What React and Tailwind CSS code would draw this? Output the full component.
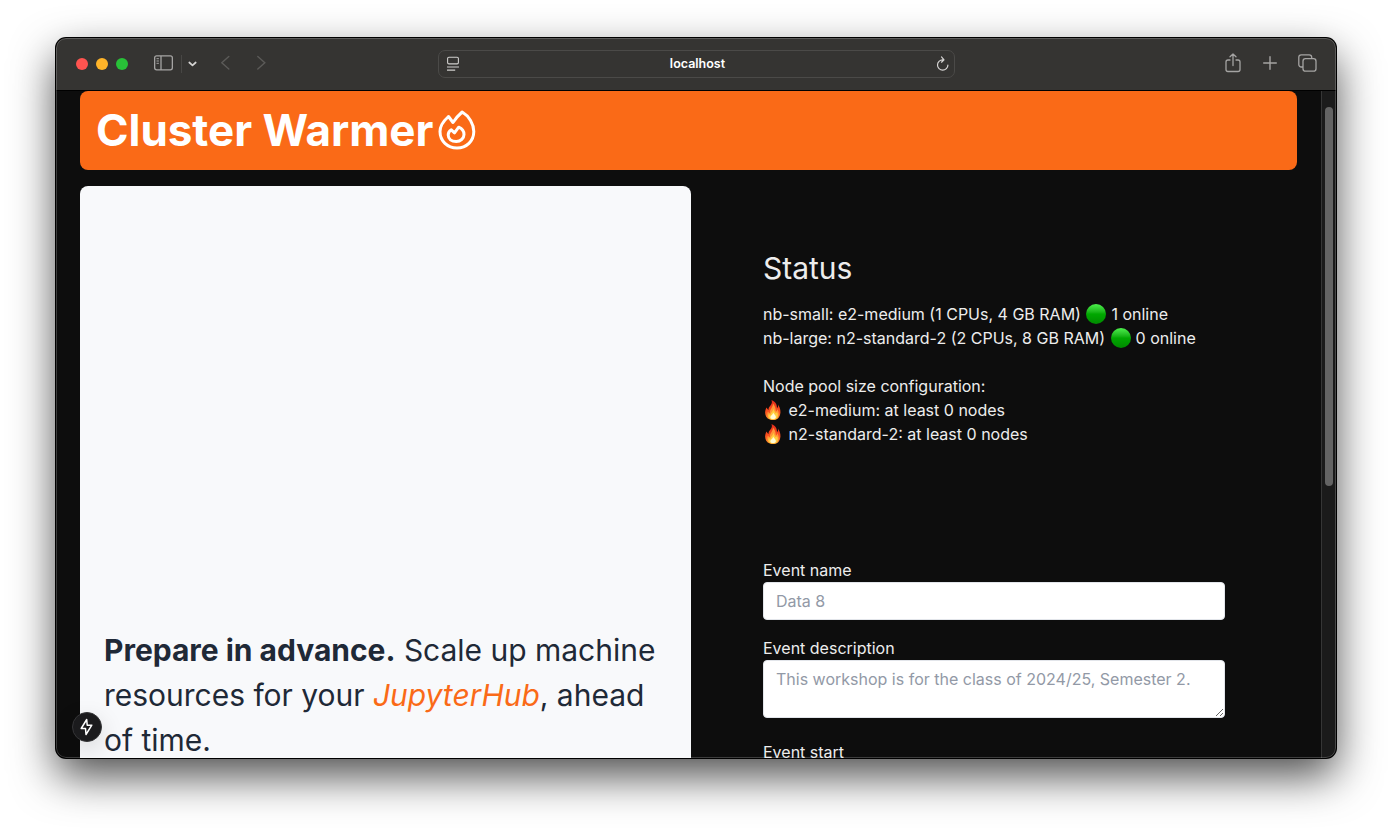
function HeaderFlame() {
  return (
    <svg width="38" height="40" viewBox="0 0 38 40" fill="none" stroke="#fff" strokeWidth="3" strokeLinejoin="round" strokeLinecap="round">
      <path d="M10.500 6.500C5.500 11 2 16.500 2 21.500C2 31 9.500 38 19 38S35.800 31 35.800 21.500C35.800 14 31 6 24.200 2C20.700 5 17.500 8.500 15 12.500C13.500 10.500 12 8.500 10.500 6.500Z" />
      <path d="M13.300 19.800C11.300 21 10.200 23 10.200 25C10.200 29 13.500 31.500 18.300 31.500C22.700 31.500 26 28 26 24.500C26 21 23.700 18.500 20.700 17.200L16.500 22.800Z" />
    </svg>
  );
}

function FireEmoji() {
  return (
    <svg className="mr-px inline-block align-[-4px]" width="20" height="20" viewBox="0 0 20 20">
      <defs>
        <linearGradient id="flame" x1="0" y1="0" x2="0" y2="1">
          <stop offset="0" stopColor="#e02a1b" />
          <stop offset=".6" stopColor="#fb531f" />
          <stop offset="1" stopColor="#ff9a2e" />
        </linearGradient>
      </defs>
      <path fill="url(#flame)" d="M8.500 0C12.500 1.500 14 4.500 14 8C15 7.500 15.300 6 15 4.500C17.500 8 18 12 17 15C16 18 14 20 10 20C5.500 20 3 17.500 2.400 14.500C1.700 11.500 2.500 9.500 3.500 7.500C4.200 8.500 4.800 9.500 5.500 10C5.300 8 6.500 6.500 7.800 5C9 3.500 9.200 2 8.500 0Z" />
      <path fill="#ff9838" d="M10 3.500C12.800 7 12.500 9.500 13 11.500C13.900 11 14.200 10 14.200 9C16.500 13 16 16 14.300 18C12.500 20 7.500 20 5.800 18C4 16 4 13.500 5 11.500C5.600 12.500 6.200 13 7 13C6.500 9.500 10 7.500 10 3.500Z" />
      <path fill="#ffcf3f" d="M10.300 8.500C11 11 12 12 12.700 13.300C13.400 13 13.700 12.500 13.800 12C15.300 14.500 15 17 13.700 18.500C12 20 8 20 6.400 18.500C5 17 5.200 15.500 5.800 14C6.400 14.600 7 14.800 7.600 14.700C7.500 12.500 10.300 11.500 10.300 8.500Z" />
      <path fill="#fffbd6" d="M10.200 12.500C10.800 14.500 13.300 15.200 12.800 17.700C12.400 19.500 7.700 19.600 7.400 17.700C7.100 15.700 10 14.800 10.200 12.500Z" />
    </svg>
  );
}

function GreenDot() {
  return <span className="ml-px mr-[0.5px] inline-block size-5 rounded-full align-[-4px] bg-linear-to-b from-[#4cf04c] via-[#00a800] via-50% to-[#008a00]" />;
}

function Toolbar() {
  return (
    <div className="flex h-[53px] shrink-0 items-center border-b border-black bg-[#353432] pb-px pl-5 pr-[19px] text-[#a5a4a3]">
      <div className="flex gap-2">
        <span className="size-3 rounded-full bg-[#ff5450]" />
        <span className="size-3 rounded-full bg-[#ffb429]" />
        <span className="size-3 rounded-full bg-[#28c138]" />
      </div>
      <svg className="-mt-px ml-[26px]" width="19" height="16" viewBox="0 0 19 16" fill="none" stroke="currentColor" strokeWidth="1.300">
        <rect x=".65" y=".85" width="17.700" height="14" rx="2" />
        <path d="M7 1v14" />
        <path d="M2.500 3.700h2.400M2.500 6h2.400M2.500 8.300h2.400" strokeWidth="1" />
      </svg>
      <span className="ml-2 h-[18px] w-px bg-[#484745]" />
      <svg className="ml-[6px]" width="9" height="6" viewBox="0 0 9 6" fill="none" stroke="#d5d4d3" strokeWidth="1.700" strokeLinecap="round" strokeLinejoin="round">
        <path d="M1.300 1.500 4.500 4.300 7.700 1.500" />
      </svg>
      <svg className="-mt-px ml-6" width="9" height="16" viewBox="0 0 9 16" fill="none" stroke="#5b5a58" strokeWidth="1.400" strokeLinecap="round">
        <path d="M7.800 1.400.8 7.700l7 6.300" />
      </svg>
      <svg className="-mt-px ml-[27px]" width="9" height="16" viewBox="0 0 9 16" fill="none" stroke="#5b5a58" strokeWidth="1.400" strokeLinecap="round">
        <path d="m.8 1.400 7 6.300-7 6.300" />
      </svg>
      <div className="ml-[172px] flex h-7 w-[517px] items-center rounded-[7px] border border-[#4b4a48] pl-2 pr-[5px]">
        <svg width="12" height="15" viewBox="0 0 12 15" fill="none" stroke="#cfcecd" strokeWidth="1.100">
          <rect x=".6" y="1.200" width="10.800" height="6.700" rx="1.300" />
          <path d="M0 11h12M0 14.100h8.200" />
        </svg>
        <span className="flex-1 pt-0.5 text-center text-[12.500px] font-semibold text-white">localhost</span>
        <svg width="13" height="15" viewBox="0 0 13 15" fill="none" stroke="#d5d4d3" strokeWidth="1.200" strokeLinecap="round" strokeLinejoin="round">
          <path d="M11.900 9A5.200 5.200 0 1 1 6.700 3.800M5.500.9l2.500 2.900-2.500 2.400" />
        </svg>
      </div>
      <svg className="-mt-[2px] ml-auto" width="16" height="20" viewBox="0 0 16 20" fill="none" stroke="currentColor" strokeWidth="1.300" strokeLinecap="round" strokeLinejoin="round">
        <path d="M5 7H3a2 2 0 0 0-2 2v7.500a2 2 0 0 0 2 2h10a2 2 0 0 0 2-2V9a2 2 0 0 0-2-2h-2M8 12.500V1M5 3.800 8 1l3 2.800" />
      </svg>
      <svg className="-mt-px ml-[22px]" width="14" height="14" viewBox="0 0 14 14" fill="none" stroke="currentColor" strokeWidth="1.400" strokeLinecap="round">
        <path d="M7 .7v12.600M.7 7h12.600" />
      </svg>
      <svg className="-mt-px ml-[21px]" width="19" height="18" viewBox="0 0 19 18" fill="none" stroke="currentColor" strokeWidth="1.300">
        <rect x="5" y="4.700" width="13" height="12.500" rx="2.500" />
        <path d="M5 13H3.300A2.500 2.500 0 0 1 .8 10.500V3.300A2.500 2.500 0 0 1 3.300.8h7.900a2.500 2.500 0 0 1 2.500 2.500v1.400" />
      </svg>
    </div>
  );
}

export default function App() {
  return (
    <div className="h-[832px] w-[1392px] overflow-hidden bg-white pl-14 pt-[38px] font-[Inter,sans-serif]">
      <div className="relative flex h-[720px] w-[1280px] flex-col overflow-hidden rounded-[10px] bg-[#0d0d0d] shadow-[0_0_0_1px_#000,0_18px_44px_rgba(0,0,0,0.7)]">
        <Toolbar />
        <div className="flex min-h-0 flex-1">
          <main className="w-[1265px] overflow-hidden px-6">
            <header className="flex h-[79px] items-center rounded-lg bg-[#fa6a17] pl-4 text-white">
              <h1 className="pb-0.5 text-[44px] font-bold leading-none tracking-[-0.04px]">Cluster Warmer</h1>
              <span className="-mt-px ml-[5px]"><HeaderFlame /></span>
            </header>
            <div className="mt-4 flex">
              <section className="h-[700px] w-[611px] rounded-lg bg-[#f8f9fb] px-6 pt-[442px]">
                <p className="whitespace-nowrap text-[30px] leading-[45px] tracking-[-0.015px] text-[#1f2937]">
                  <b>Prepare in advance.</b> Scale up machine<br />
                  resources for your <em className="text-[#fa6a17]">JupyterHub</em>, ahead<br />
                  of time.
                </p>
              </section>
              <section className="ml-[72px] w-[462px] whitespace-nowrap pt-16 text-base text-[#ededed]">
                <h2 className="text-[30px] leading-9">Status</h2>
                <div className="mt-4">
                  <p>nb-small: e2-medium (1 CPUs, 4 GB RAM) <GreenDot /> 1 online</p>
                  <p>nb-large: n2-standard-2 (2 CPUs, 8 GB RAM) <GreenDot /> 0 online</p>
                </div>
                <div className="mt-6">
                  <p>Node pool size configuration:</p>
                  <p><FireEmoji /> e2-medium: at least 0 nodes</p>
                  <p><FireEmoji /> n2-standard-2: at least 0 nodes</p>
                </div>
                <div className="mt-28 flex flex-col">
                  <label>Event name</label>
                  <input placeholder="Data 8" className="h-[38px] rounded border border-[#e2e5ea] bg-white px-3 placeholder:text-[#9299a6]" />
                  <label className="mt-4">Event description</label>
                  <textarea placeholder="This workshop is for the class of 2024/25, Semester 2." className="h-[58px] rounded border border-[#e2e5ea] bg-white px-3 py-1.5 placeholder:text-[#9299a6]" />
                  <label className="mt-[22px]">Event start</label>
                </div>
              </section>
            </div>
          </main>
          <div className="w-[15px] border-l border-[#363636] bg-[#1b1b1b] pl-[3px] pt-4">
            <div className="h-[379px] w-2 rounded-full bg-[#646464]" />
          </div>
        </div>
        <div className="absolute bottom-4 left-4 flex size-[30px] items-center justify-center rounded-full border border-[#353537] bg-[#1b1b1d] shadow-[0_8px_24px_rgba(0,0,0,0.14)]">
          <svg className="mr-px" width="13" height="18" viewBox="0 0 13 18" fill="none" stroke="#fff" strokeWidth="1.500" strokeLinejoin="round">
            <path d="M6.700 1.500 1.200 10.500h4.300l.5 6L11.800 7.200H7.200Z" />
          </svg>
        </div>
        <div className="pointer-events-none absolute inset-0 rounded-[10px] border border-white/20" />
      </div>
    </div>
  );
}
